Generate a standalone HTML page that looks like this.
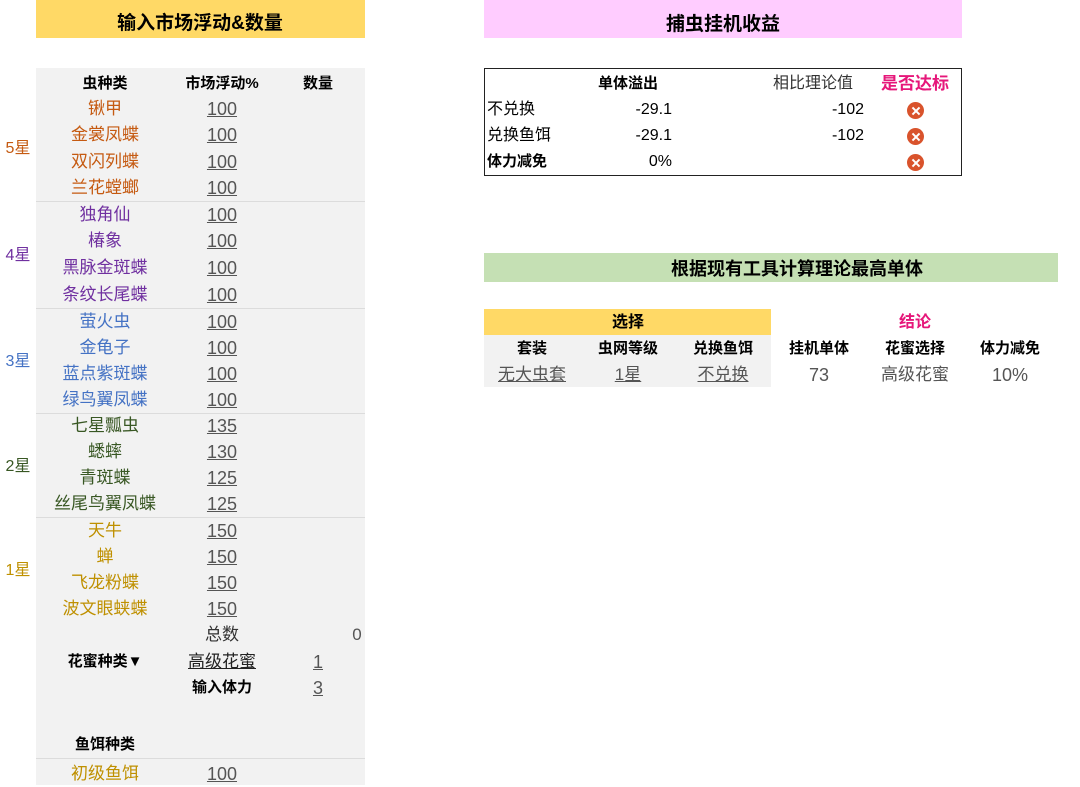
<!DOCTYPE html>
<html><head><meta charset="utf-8"><style>
body{margin:0;width:1080px;height:785px;background:#fff;position:relative;overflow:hidden;font-family:"Liberation Sans","Noto Sans CJK SC",sans-serif;font-size:17px;color:#000}
.c{position:absolute;width:200px;margin-left:-100px;text-align:center;height:26px;line-height:26px;margin-top:-12px;white-space:nowrap}
.r{position:absolute;width:200px;margin-left:-200px;text-align:right;height:26px;line-height:26px;margin-top:-12px;white-space:nowrap}
.l{position:absolute;height:26px;line-height:26px;margin-top:-12px;white-space:nowrap}
.b{font-weight:bold;font-size:15px}
.u{text-decoration:underline;color:#555;font-size:18px}
.box{position:absolute}
.o{color:#c55a11}.p{color:#7030a0}.bl{color:#4472c4}.g{color:#385723}.y{color:#bf9000}
.sep{position:absolute;left:36px;width:329px;height:1px;background:#dcdcdc}
.x{position:absolute;width:17px;height:17px;border-radius:50%;background:#d9532c;margin:-8px 0 0 -8px}
.x:before,.x:after{content:"";position:absolute;left:3.5px;top:7.5px;width:10px;height:2px;background:#fff;transform:rotate(45deg)}
.x:after{transform:rotate(-45deg)}
</style></head><body>
<div class="box" style="left:36px;top:0;width:329px;height:38px;background:#ffd966"></div>
<div class="c b" style="left:200px;top:23px;font-size:19px">输入市场浮动&amp;数量</div>
<div class="box" style="left:36px;top:68px;width:329px;height:717px;background:#f2f2f2"></div>
<div class="sep" style="top:201px"></div><div class="sep" style="top:308px"></div><div class="sep" style="top:413px"></div><div class="sep" style="top:517px"></div><div class="sep" style="top:758px"></div>
<div class="c b" style="left:105px;top:83px">虫种类</div>
<div class="c b" style="left:222px;top:83px">市场浮动%</div>
<div class="c b" style="left:318px;top:83px">数量</div>

<div class="c o" style="left:18px;top:148px;font-size:16px">5星</div>
<div class="c p" style="left:18px;top:255px;font-size:16px">4星</div>
<div class="c bl" style="left:18px;top:361px;font-size:16px">3星</div>
<div class="c g" style="left:18px;top:466px;font-size:16px">2星</div>
<div class="c y" style="left:18px;top:570px;font-size:16px">1星</div>

<div class="c o" style="left:105px;top:108px">锹甲</div><div class="c u" style="left:222px;top:108px">100</div>
<div class="c o" style="left:105px;top:134px">金裳凤蝶</div><div class="c u" style="left:222px;top:134px">100</div>
<div class="c o" style="left:105px;top:161px">双闪列蝶</div><div class="c u" style="left:222px;top:161px">100</div>
<div class="c o" style="left:105px;top:187px">兰花螳螂</div><div class="c u" style="left:222px;top:187px">100</div>
<div class="c p" style="left:105px;top:214px">独角仙</div><div class="c u" style="left:222px;top:214px">100</div>
<div class="c p" style="left:105px;top:240px">椿象</div><div class="c u" style="left:222px;top:240px">100</div>
<div class="c p" style="left:105px;top:267px">黑脉金斑蝶</div><div class="c u" style="left:222px;top:267px">100</div>
<div class="c p" style="left:105px;top:294px">条纹长尾蝶</div><div class="c u" style="left:222px;top:294px">100</div>
<div class="c bl" style="left:105px;top:321px">萤火虫</div><div class="c u" style="left:222px;top:321px">100</div>
<div class="c bl" style="left:105px;top:347px">金龟子</div><div class="c u" style="left:222px;top:347px">100</div>
<div class="c bl" style="left:105px;top:373px">蓝点紫斑蝶</div><div class="c u" style="left:222px;top:373px">100</div>
<div class="c bl" style="left:105px;top:399px">绿鸟翼凤蝶</div><div class="c u" style="left:222px;top:399px">100</div>
<div class="c g" style="left:105px;top:425px">七星瓢虫</div><div class="c u" style="left:222px;top:425px">135</div>
<div class="c g" style="left:105px;top:451px">蟋蟀</div><div class="c u" style="left:222px;top:451px">130</div>
<div class="c g" style="left:105px;top:477px">青斑蝶</div><div class="c u" style="left:222px;top:477px">125</div>
<div class="c g" style="left:105px;top:503px">丝尾鸟翼凤蝶</div><div class="c u" style="left:222px;top:503px">125</div>
<div class="c y" style="left:105px;top:530px">天牛</div><div class="c u" style="left:222px;top:530px">150</div>
<div class="c y" style="left:105px;top:556px">蝉</div><div class="c u" style="left:222px;top:556px">150</div>
<div class="c y" style="left:105px;top:582px">飞龙粉蝶</div><div class="c u" style="left:222px;top:582px">150</div>
<div class="c y" style="left:105px;top:608px">波文眼蛱蝶</div><div class="c u" style="left:222px;top:608px">150</div>
<div class="c" style="left:222px;top:634px;color:#333">总数</div><div class="c" style="left:357px;top:634px;color:#555">0</div>
<div class="c b" style="left:105px;top:661px">花蜜种类▼</div><div class="c" style="left:222px;top:661px;text-decoration:underline;color:#222">高级花蜜</div><div class="c u" style="left:318px;top:661px">1</div>
<div class="c b" style="left:222px;top:687px">输入体力</div><div class="c u" style="left:318px;top:687px">3</div>
<div class="c b" style="left:105px;top:744px">鱼饵种类</div>
<div class="c y" style="left:105px;top:773px">初级鱼饵</div><div class="c u" style="left:222px;top:773px">100</div>

<div class="box" style="left:484px;top:0;width:478px;height:38px;background:#ffccff"></div>
<div class="c b" style="left:723px;top:24px;font-size:19px">捕虫挂机收益</div>
<div class="box" style="left:484px;top:68px;width:476px;height:106px;border:1px solid #222"></div>
<div class="c b" style="left:628px;top:83px">单体溢出</div>
<div class="c" style="left:813px;top:83px;color:#333;font-size:16px">相比理论值</div>
<div class="c b" style="left:915px;top:83px;color:#e6177a;font-size:17px">是否达标</div>
<div class="l" style="left:487px;top:109px;font-size:16px">不兑换</div><div class="r" style="left:672px;top:109px;font-size:16px">-29.1</div><div class="r" style="left:864px;top:109px;font-size:16px">-102</div><div class="x" style="left:915px;top:110px"></div>
<div class="l" style="left:487px;top:135px;font-size:16px">兑换鱼饵</div><div class="r" style="left:672px;top:135px;font-size:16px">-29.1</div><div class="r" style="left:864px;top:135px;font-size:16px">-102</div><div class="x" style="left:915px;top:136px"></div>
<div class="l b" style="left:487px;top:161px">体力减免</div><div class="r" style="left:672px;top:161px;font-size:16px">0%</div><div class="x" style="left:915px;top:162px"></div>

<div class="box" style="left:484px;top:253px;width:574px;height:29px;background:#c5e0b4"></div>
<div class="c b" style="left:771px;top:268px;font-size:18px">根据现有工具计算理论最高单体</div>
<div class="box" style="left:484px;top:309px;width:287px;height:26px;background:#ffd966"></div>
<div class="box" style="left:484px;top:335px;width:287px;height:52px;background:#f2f2f2"></div>
<div class="c b" style="left:628px;top:322px;font-size:16px">选择</div>
<div class="c b" style="left:915px;top:322px;font-size:16px;color:#e6177a">结论</div>
<div class="c b" style="left:532px;top:348px">套装</div>
<div class="c b" style="left:628px;top:348px">虫网等级</div>
<div class="c b" style="left:723px;top:348px">兑换鱼饵</div>
<div class="c b" style="left:819px;top:348px">挂机单体</div>
<div class="c b" style="left:915px;top:348px">花蜜选择</div>
<div class="c b" style="left:1010px;top:348px">体力减免</div>
<div class="c u" style="left:532px;top:374px;font-size:17px">无大虫套</div>
<div class="c u" style="left:628px;top:374px;font-size:17px">1星</div>
<div class="c u" style="left:723px;top:374px;font-size:17px">不兑换</div>
<div class="c" style="left:819px;top:374px;color:#555;font-size:18px">73</div>
<div class="c" style="left:915px;top:374px;color:#555">高级花蜜</div>
<div class="c" style="left:1010px;top:374px;color:#555;font-size:18px">10%</div>
</body></html>
